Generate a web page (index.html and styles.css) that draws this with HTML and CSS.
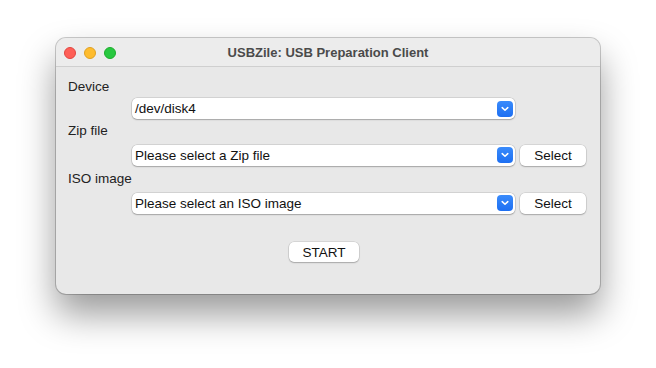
FILE: index.html
```html
<!DOCTYPE html>
<html lang="en">
<head>
    <meta charset="UTF-8">
    <meta name="viewport" content="width=device-width, initial-scale=1.0">
    <title>USBZile: USB Preparation Client</title>
    <link rel="stylesheet" href="styles.css">
</head>
<body>
    <div class="window">
        <div class="titlebar">
            <div class="lights">
                <span class="light red"></span>
                <span class="light yellow"></span>
                <span class="light green"></span>
            </div>
            <div class="title">USBZile: USB Preparation Client</div>
        </div>
        <div class="content">
            <div class="field-label first">Device</div>
            <div class="row device-row">
                <div class="combo">
                    <span class="combo-text">/dev/disk4</span>
                    <span class="chevron">
                        <svg width="8" height="6" viewBox="0 0 8 6"><path d="M1.2 1.6 L4 4.3 L6.8 1.6" fill="none" stroke="#fff" stroke-width="1.5" stroke-linecap="round" stroke-linejoin="round"/></svg>
                    </span>
                </div>
            </div>

            <div class="field-label">Zip file</div>
            <div class="row">
                <div class="combo">
                    <span class="combo-text">Please select a Zip file</span>
                    <span class="chevron">
                        <svg width="8" height="6" viewBox="0 0 8 6"><path d="M1.2 1.6 L4 4.3 L6.8 1.6" fill="none" stroke="#fff" stroke-width="1.5" stroke-linecap="round" stroke-linejoin="round"/></svg>
                    </span>
                </div>
                <button class="btn select-btn">Select</button>
            </div>

            <div class="field-label iso">ISO image</div>
            <div class="row">
                <div class="combo">
                    <span class="combo-text">Please select an ISO image</span>
                    <span class="chevron">
                        <svg width="8" height="6" viewBox="0 0 8 6"><path d="M1.2 1.6 L4 4.3 L6.8 1.6" fill="none" stroke="#fff" stroke-width="1.5" stroke-linecap="round" stroke-linejoin="round"/></svg>
                    </span>
                </div>
                <button class="btn select-btn">Select</button>
            </div>

            <div class="actions">
                <button class="btn start-btn">START</button>
            </div>
        </div>
    </div>
</body>
</html>
```

FILE: styles.css
```css
html {
    height: 100%;
    background-color: #ffffff;
}
body {
    margin: 0;
    min-height: 368px;
    box-sizing: border-box;
    padding: 38px 0 0 56px;
    font-family: "Liberation Sans", Arial, sans-serif;
    font-size: 13.5px;
    color: #1e1e1e;
}
.window {
    width: 544px;
    height: 256px;
    box-sizing: border-box;
    background-color: #e8e8e8;
    border-radius: 10px;
    box-shadow: 0 0 0 1px rgba(0, 0, 0, 0.2), 0 20px 36px rgba(0, 0, 0, 0.4);
    overflow: hidden;
}
.titlebar {
    height: 29px;
    box-sizing: border-box;
    background-color: #ececec;
    border-bottom: 1px solid #cfcfcf;
    display: flex;
    align-items: center;
    position: relative;
}
.lights {
    display: flex;
    gap: 8px;
    padding-left: 8px;
    padding-top: 1px;
}
.light {
    width: 12px;
    height: 12px;
    border-radius: 50%;
    box-sizing: border-box;
}
.red {
    background-color: #fe5f57;
    border: 0.5px solid #e14640;
}
.yellow {
    background-color: #febc2e;
    border: 0.5px solid #dfa023;
}
.green {
    background-color: #28c840;
    border: 0.5px solid #1dad2b;
}
.title {
    position: absolute;
    left: 0;
    right: 0;
    text-align: center;
    font-weight: bold;
    font-size: 13px;
    color: #4a4a4a;
    pointer-events: none;
}
.content {
    padding: 12px 14px 0 12px;
}
.field-label {
    height: 16px;
    line-height: 16px;
    margin-top: 3px;
    color: #222;
}
.field-label.first {
    margin-top: 0;
}
.field-label.iso {
    margin-top: 4px;
}
.row {
    display: flex;
    align-items: center;
    gap: 5px;
    height: 24px;
    margin-top: 4px;
    padding-left: 64px;
}
.device-row {
    height: 22px;
    margin-top: 3px;
    align-items: flex-start;
}
.combo {
    width: 383px;
    height: 21px;
    box-sizing: border-box;
    background-color: #fff;
    border-radius: 5px;
    box-shadow: 0 0 0 0.5px rgba(0, 0, 0, 0.18), 0 1px 1.5px rgba(0, 0, 0, 0.22);
    display: flex;
    align-items: center;
    justify-content: space-between;
    padding: 0 2px 0 3px;
}
.combo-text {
    color: #111;
}
.chevron {
    width: 16px;
    height: 16px;
    border-radius: 4px;
    background: linear-gradient(#3a8bfb, #1d6ff2);
    display: flex;
    align-items: center;
    justify-content: center;
}
.btn {
    font-family: "Liberation Sans", Arial, sans-serif;
    font-size: 13.5px;
    color: #111;
    background-color: #fff;
    border: none;
    border-radius: 5px;
    box-shadow: 0 0 0 0.5px rgba(0, 0, 0, 0.15), 0 1px 1.5px rgba(0, 0, 0, 0.22);
    padding: 0;
    cursor: pointer;
}
.select-btn {
    width: 66px;
    height: 21px;
}
.actions {
    display: flex;
    justify-content: center;
    margin-top: 27px;
    padding-right: 6px;
}
.start-btn {
    width: 70px;
    height: 20px;
}
```
